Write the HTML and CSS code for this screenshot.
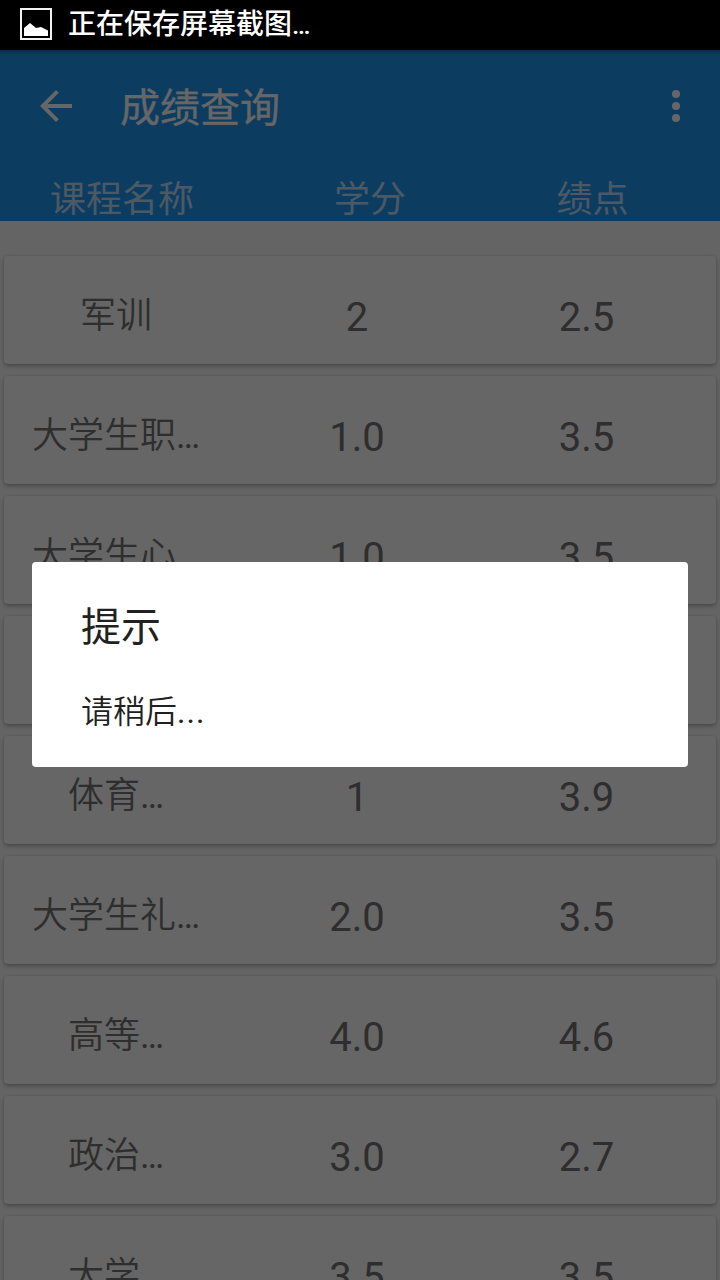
FILE: index.html
```html
<!DOCTYPE html>
<html lang="zh-CN">
<head>
<meta charset="utf-8">
<title>成绩查询</title>
<link rel="stylesheet" href="styles.css">
</head>
<body>
<div class="screen">
  <div class="status-bar">
    <svg class="status-icon" width="34" height="34" viewBox="0 0 34 34">
      <rect x="2" y="2" width="30" height="30" fill="none" stroke="#f4f4f4" stroke-width="2"/>
      <path d="M5 29V21L11 16L17 21L22 20L29 23.500V29Z" fill="#fff"/>
    </svg>
    <span class="status-text">正在保存屏幕截图<span class="status-dots">…</span></span>
  </div>
  <div class="app">
    <header class="header">
      <div class="toolbar">
        <svg class="back" width="32" height="32" viewBox="0 0 32 32">
          <path d="M32 14H7.660L18.840 2.820L16 0L0 16L16 32L18.820 29.180L7.660 18H32Z" fill="#fff"/>
        </svg>
        <h1 class="title">成绩查询</h1>
        <svg class="more" width="8" height="32" viewBox="0 0 8 32" fill="#fff">
          <circle cx="4" cy="4" r="4"/><circle cx="4" cy="16" r="4"/><circle cx="4" cy="28" r="4"/>
        </svg>
      </div>
      <div class="columns"><span>课程名称</span><span>学分</span><span>绩点</span></div>
    </header>
    <main class="list">
      <div class="card"><span class="name">军训</span><span class="num">2</span><span class="num">2.5</span></div>
      <div class="card"><span class="name">大学生职<span class="dots">…</span></span><span class="num">1.0</span><span class="num">3.5</span></div>
      <div class="card"><span class="name">大学生心<span class="dots">…</span></span><span class="num">1.0</span><span class="num">3.5</span></div>
      <div class="card"></div>
      <div class="card"><span class="name">体育<span class="dots">…</span></span><span class="num">1</span><span class="num">3.9</span></div>
      <div class="card"><span class="name">大学生礼<span class="dots">…</span></span><span class="num">2.0</span><span class="num">3.5</span></div>
      <div class="card"><span class="name">高等<span class="dots">…</span></span><span class="num">4.0</span><span class="num">4.6</span></div>
      <div class="card"><span class="name">政治<span class="dots">…</span></span><span class="num">3.0</span><span class="num">2.7</span></div>
      <div class="card"><span class="name">大学<span class="dots">…</span></span><span class="num">3.5</span><span class="num">3.5</span></div>
    </main>
    <div class="scrim">
      <section class="dialog">
        <h2 class="dialog-title">提示</h2>
        <p class="dialog-text">请稍后<span class="dialog-dots">...</span></p>
      </section>
    </div>
  </div>
</div>
</body>
</html>
```
FILE: styles.css
```css
* { box-sizing: border-box; }
body {
  margin: 0;
  font-family: Roboto, "Noto Sans CJK SC", sans-serif;
}
.screen {
  width: 720px;
  height: 1280px;
  overflow: hidden;
  display: flex;
  flex-direction: column;
}
.status-bar {
  height: 50px;
  flex: none;
  background: #000;
  color: #fff;
  display: flex;
  align-items: center;
  padding: 0 0 2px 19px;
}
.status-text {
  margin-left: 15px;
  padding-top: 2px;
  font-size: 28px;
  line-height: 40px;
  font-weight: 500;
}
.status-dots {
  font-weight: 500;
  font-size: 26px;
}
.app {
  position: relative;
  flex: 1;
  min-height: 0;
  overflow: hidden;
  background: #fafafa;
}
.header {
  height: 171px;
  background: linear-gradient(rgba(0, 0, 0, .25), rgba(0, 0, 0, 0) 4px) #2196f3;
  color: #fff;
}
.toolbar {
  height: 112px;
  display: flex;
  align-items: center;
  padding: 0 40px;
}
.title {
  margin: 0 auto 0 48px;
  padding-top: 5px;
  font-size: 40px;
  line-height: 56px;
  font-weight: 400;
  -webkit-text-stroke: .3px #fff;
}
.columns {
  display: grid;
  grid-template-columns: 244px 252px 193px;
  padding-top: 12px;
  text-align: center;
  font-size: 36px;
  line-height: 47px;
  color: rgba(255, 255, 255, .7);
}
.columns span { padding-top: 3px; }
.list {
  display: flex;
  flex-direction: column;
  gap: 12px;
  padding: 35px 4px 0;
}
.card {
  height: 108px;
  flex: none;
  display: grid;
  grid-template-columns: 224px 257px 202px;
  background: #fff;
  border-radius: 4px;
  box-shadow: 0 2px 4px rgba(0, 0, 0, .28), 0 0 2px rgba(0, 0, 0, .12);
  text-align: center;
  color: #737373;
}
.name {
  padding-top: 34px;
  font-size: 36px;
  line-height: 52px;
  font-weight: 350;
}
.dots { font-weight: 400; }
.num {
  padding: 38px 0 0 1px;
  font-size: 40px;
  line-height: 48px;
}
.scrim {
  position: absolute;
  inset: 0;
  background: rgba(0, 0, 0, .6);
  padding: 512px 32px 0;
}
.dialog {
  height: 205px;
  background: #fff;
  border-radius: 4px;
  padding: 38px 48px 0 49px;
  color: #212121;
}
.dialog-title {
  margin: 0;
  font-size: 40px;
  line-height: 56px;
  font-weight: 400;
}
.dialog-text {
  margin: 32px 0 0;
  font-size: 32px;
  line-height: 48px;
  font-weight: 350;
}
.dialog-dots {
  letter-spacing: 1px;
  font-weight: 400;
}
```
